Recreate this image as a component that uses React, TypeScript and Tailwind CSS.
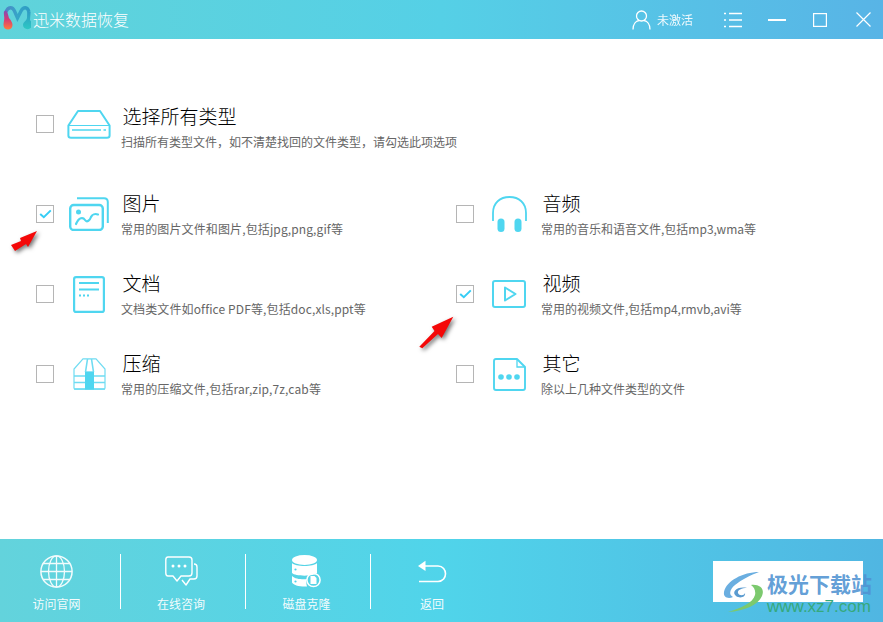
import type { ReactNode } from "react";

const font = { fontFamily: '"Noto Sans CJK SC", "Noto Sans", sans-serif' };

function Logo() {
  return (
    <svg width="28" height="25" viewBox="0 0 28 25" fill="none">
      <defs>
        <linearGradient id="lg" x1="0" y1="0" x2="0" y2="1">
          <stop offset="0" stopColor="#7d52b8" />
          <stop offset="0.45" stopColor="#d23a78" />
          <stop offset="1" stopColor="#ff7a3c" />
        </linearGradient>
        <linearGradient id="lt" x1="0" y1="0" x2="1" y2="0">
          <stop offset="0" stopColor="#4f86c6" />
          <stop offset="0.5" stopColor="#35a6c8" />
          <stop offset="1" stopColor="#2f9cc4" />
        </linearGradient>
        <linearGradient id="lr" x1="0" y1="0" x2="0" y2="1">
          <stop offset="0" stopColor="#2f9cc4" />
          <stop offset="1" stopColor="#2cc8c4" />
        </linearGradient>
      </defs>
      <path d="M3 7 C5 1.5 9.5 1.5 11.5 6 L14.5 13 L18 6 C20.5 1.5 24.5 1.5 26 7" stroke="url(#lt)" strokeWidth="3.4" />
      <path d="M.8 8 C.8 4.5 4 4.5 4.6 8 L6 13 C8.5 16 9.5 18 9.5 20 C9.5 26 .5 26 .5 20 C.5 17 1.5 15 1.2 12 Z" fill="url(#lg)" />
      <path d="M24.2 7 H27.6 L27 15 C28.5 17 29 18.5 29 20 C29 25.5 20 25.5 20 20 C20 17 23.5 16 24 13 Z" fill="url(#lr)" />
    </svg>
  );
}

function Check() {
  return (
    <svg width="13" height="10" viewBox="0 0 13 10" fill="none">
      <path d="M1.2 5 L4.8 8.2 L11.8 1.4" stroke="#36cdf5" strokeWidth="2" />
    </svg>
  );
}

const stroke = "#4fd6f0";

function DiskIcon() {
  return (
    <svg width="44" height="29" viewBox="0 0 44 29" fill="none" stroke={stroke} strokeWidth="2">
      <path d="M11 1 H33 L42.6 15.5 V25.5 Q42.6 27.8 40 27.8 H4 Q1.4 27.8 1.4 25.5 V15.5 Z" strokeLinejoin="round" />
      <path d="M1.4 15.5 H42.6" strokeWidth="1.2" />
      <path d="M5 20 H34 M36.5 20 H39" strokeWidth="1.6" />
    </svg>
  );
}

function PictureIcon() {
  return (
    <svg width="40" height="34" viewBox="0 0 40 34" fill="none" stroke={stroke} strokeWidth="2">
      <rect x="1.2" y="8" width="32.6" height="25" rx="3.5" strokeWidth="2.4" />
      <path d="M8 1.2 H35 Q38.8 1.2 38.8 5 V26" />
      <circle cx="9.5" cy="15" r="2.5" fill={stroke} stroke="none" />
      <path d="M7 27 C10 20 14 20 16 23 C18 26 21 23 22 20 C23 17.5 26 16.5 29 17.5" strokeWidth="2.2" strokeLinecap="round" />
    </svg>
  );
}

function DocIcon() {
  return (
    <svg width="32" height="37" viewBox="0 0 32 37" fill="none" stroke={stroke}>
      <rect x="1.1" y="1.1" width="29.8" height="34.8" rx="2" strokeWidth="2.2" />
      <path d="M6 7 H26 M6 13.5 H26" strokeWidth="2.2" />
      <path d="M6 19.5 H8 M10 19.5 H12 M14 19.5 H16" strokeWidth="1.8" />
    </svg>
  );
}

function ZipIcon() {
  return (
    <svg width="33" height="32" viewBox="0 0 33 32" fill="none" stroke="#6fdcf2" strokeWidth="1.2">
      <path d="M10 .8 H23 L32 11 V30 Q32 31.2 30.8 31.2 H2.2 Q1 31.2 1 30 V11 Z" />
      <path d="M1 18 H32 M1 24.5 H32 M1 31 H32" strokeWidth="1.4" />
      <path d="M14.5 1 L12.5 14 M18.5 1 L20.5 14 M12.5 14 H20.5" strokeWidth="1.6" />
      <rect x="12" y="14" width="9" height="17.5" fill={stroke} stroke="none" />
    </svg>
  );
}

function AudioIcon() {
  return (
    <svg width="35" height="36" viewBox="0 0 35 36" fill="none" stroke={stroke}>
      <path d="M1 25 V17 C1 7 8 1 17.5 1 C27 1 34 7 34 17 V25" strokeWidth="1.8" />
      <rect x="5.5" y="22.5" width="7" height="13.5" rx="3.5" fill={stroke} stroke="none" />
      <rect x="22.5" y="22.5" width="7" height="13.5" rx="3.5" fill={stroke} stroke="none" />
    </svg>
  );
}

function VideoIcon() {
  return (
    <svg width="34" height="28" viewBox="0 0 34 28" fill="none" stroke={stroke} strokeWidth="2">
      <rect x="1" y="1" width="32" height="26" rx="2" />
      <path d="M13 7.5 L23.5 14 L13 20.5 Z" strokeLinejoin="round" />
    </svg>
  );
}

function OtherIcon() {
  return (
    <svg width="33" height="33" viewBox="0 0 33 33" fill="none" stroke={stroke} strokeWidth="1.9">
      <path d="M24 1 H3 Q1 1 1 3 V30 Q1 32 3 32 H30 Q32 32 32 30 V9 Z" strokeLinejoin="round" />
      <path d="M24 1 V9 H32" fill="none" strokeWidth="1.3" />
      <circle cx="8" cy="19" r="2.8" fill={stroke} stroke="none" />
      <circle cx="16" cy="19" r="2.8" fill={stroke} stroke="none" />
      <circle cx="24" cy="19" r="2.8" fill={stroke} stroke="none" />
    </svg>
  );
}

function GlobeIcon() {
  return (
    <svg width="33" height="33" viewBox="0 0 33 33" fill="none" stroke="#fff" strokeWidth="1.3" opacity="0.92">
      <circle cx="16.5" cy="16.5" r="15.6" strokeWidth="1.5" />
      <ellipse cx="16.5" cy="16.5" rx="8" ry="15.6" />
      <path d="M16.5 1 V32 M1 16.5 H32 M3.5 8.5 H29.5 M3.5 24.5 H29.5" />
    </svg>
  );
}

function ChatIcon() {
  return (
    <svg width="33" height="30" viewBox="0 0 33 30" fill="none" stroke="#fff" strokeWidth="1.4">
      <path d="M3 1 H24 Q27 1 27 4 V17 Q27 20 24 20 H16 L12 25 L8 20 H3 Q.8 20 .8 17 V4 Q.8 1 3 1 Z" strokeLinejoin="round" />
      <path d="M29 8 Q32 8 32 11 V20 Q32 23 29 23 H25 L21 29 L17 24" strokeLinejoin="round" />
      <circle cx="8" cy="10" r="1.5" fill="#fff" stroke="none" />
      <circle cx="14" cy="10" r="1.5" fill="#fff" stroke="none" />
      <circle cx="20" cy="10" r="1.5" fill="#fff" stroke="none" />
    </svg>
  );
}

function DbIcon() {
  return (
    <svg width="29" height="33" viewBox="0 0 29 33" fill="#fff">
      <ellipse cx="12.5" cy="5" rx="12.5" ry="5" />
      <path d="M0 8 C3 12 22 12 25 8 V18 C22 21.5 3 21.5 0 18 Z" />
      <path d="M0 21 C3 24.5 12 24.5 15 24 C14 26 14 28 15 31.5 C8 32 1 30 0 27.5 Z" />
      <circle cx="3.5" cy="14.5" r="1.1" fill="#4fd3ea" />
      <circle cx="3.5" cy="26.5" r="1.1" fill="#4fd3ea" />
      <circle cx="21.5" cy="25" r="6.6" fill="none" stroke="#fff" strokeWidth="1.5" />
      <path d="M18.5 21 H22.5 L24.5 23 V29 H18.5 Z" />
    </svg>
  );
}

function BackIcon() {
  return (
    <svg width="29" height="23" viewBox="0 0 29 23" fill="none" stroke="#fff" strokeWidth="1.6">
      <path d="M6 6 H20 C30 6 30 21.5 20 21.5 H1" />
      <path d="M0 6 L7.5 .8 V11 Z" fill="#fff" stroke="none" />
    </svg>
  );
}

function Option({ title, desc, icon, checked, lower, wide }: { title: string; desc: string; icon: ReactNode; checked?: boolean; lower?: boolean; wide?: boolean }) {
  return (
    <div className="flex items-center h-20">
      <div className="flex items-center justify-center w-[18px] h-[18px] border border-[#b5b5b5] bg-white shrink-0">
        {checked && <Check />}
      </div>
      <div className="flex items-center justify-center w-[64px] ml-[3px] shrink-0">{icon}</div>
      <div className={lower ? "pt-[6px]" : ""}>
        <div className="text-[19px] leading-[26px] font-light text-black pl-[1.5px] mt-[-1px] whitespace-nowrap">{title}</div>
        <div className={`text-[12px] leading-[16px] mt-[5px] text-[#666] whitespace-nowrap ${wide ? "tracking-[0.12px]" : ""}`}>{desc}</div>
      </div>
    </div>
  );
}

function FootItem({ icon, label, className }: { icon: ReactNode; label: string; className: string }) {
  return (
    <div className={`flex flex-col items-center justify-between h-[55px] ${className}`}>
      <div className="flex items-center justify-center h-[34px]">{icon}</div>
      <div className="text-[12px] leading-[14px] text-white/95 mb-[-2px]">{label}</div>
    </div>
  );
}

function Arrow({ className, points }: { className: string; points: string }) {
  return (
    <svg className={`absolute ${className}`} width="44" height="40" viewBox="0 0 44 40" style={{ filter: "drop-shadow(2px 2px 2px rgba(0,0,0,0.55))" }}>
      <polygon points={points} fill="#f40808" />
    </svg>
  );
}

export default function App() {
  return (
    <div className="relative w-[883px] h-[622px] flex flex-col bg-white overflow-hidden" style={font}>
      <header className="h-[39px] flex items-center shrink-0 bg-gradient-to-r from-[#60d3da] via-[#55d0e6] to-[#58b4e6] text-white">
        <div className="ml-[3px] w-[28px] mt-[-4px]">
          <Logo />
        </div>
        <span className="ml-[2px] text-[16px] leading-none mt-[-1px] font-light">迅米数据恢复</span>
        <div className="ml-auto flex items-center">
          <svg width="19" height="20" viewBox="0 0 19 20" fill="none" stroke="#fff" strokeWidth="1.3">
            <circle cx="9.5" cy="6" r="5" />
            <path d="M1 19.5 C1 14 4 11 7 10.5 M18 19.5 C18 14 15 11 12 10.5" />
          </svg>
          <span className="ml-[6px] text-[12px] opacity-90">未激活</span>
          <svg className="ml-[31px]" width="18" height="16" viewBox="0 0 18 16" stroke="#fff" strokeWidth="1.5">
            <path d="M0 1.5 H2 M5 1.5 H18 M0 8 H2 M5 8 H18 M0 14.5 H2 M5 14.5 H18" />
          </svg>
          <svg className="ml-[26px]" width="18" height="2" viewBox="0 0 18 2" stroke="#fff" strokeWidth="2">
            <path d="M0 1 H18" />
          </svg>
          <svg className="ml-[27px]" width="14" height="14" viewBox="0 0 14 14" fill="none" stroke="#fff" strokeWidth="1.2">
            <rect x=".6" y=".6" width="12.8" height="12.8" />
          </svg>
          <svg className="ml-[29px] mr-[12px]" width="15" height="15" viewBox="0 0 15 15" stroke="#fff" strokeWidth="1.2">
            <path d="M.5 .5 L14.5 14.5 M14.5 .5 L.5 14.5" />
          </svg>
        </div>
      </header>

      <main className="flex-1 pt-[45px] pl-[36px]">
        <div className="mb-[10px]">
          <Option lower icon={<DiskIcon />} title="选择所有类型" desc="扫描所有类型文件，如不清楚找回的文件类型，请勾选此项选项" />
        </div>
        <div className="grid grid-cols-[420px_1fr]">
          <Option checked wide icon={<PictureIcon />} title="图片" desc="常用的图片文件和图片,包括jpg,png,gif等" />
          <Option icon={<AudioIcon />} title="音频" desc="常用的音乐和语音文件,包括mp3,wma等" />
          <Option wide icon={<DocIcon />} title="文档" desc="文档类文件如office PDF等,包括doc,xls,ppt等" />
          <Option checked icon={<VideoIcon />} title="视频" desc="常用的视频文件,包括mp4,rmvb,avi等" />
          <Option wide icon={<ZipIcon />} title="压缩" desc="常用的压缩文件,包括rar,zip,7z,cab等" />
          <Option icon={<OtherIcon />} title="其它" desc="除以上几种文件类型的文件" />
        </div>
      </main>

      <footer className="h-[83px] shrink-0 flex items-start pt-[15px] bg-gradient-to-r from-[#63d3dc] via-[#50d4ea] to-[#50b6e2]">
        <FootItem icon={<GlobeIcon />} label="访问官网" className="w-[121px] pr-[7px] border-r border-white" />
        <FootItem icon={<ChatIcon />} label="在线咨询" className="w-[125px] pr-[4px] border-r border-white" />
        <FootItem icon={<DbIcon />} label="磁盘克隆" className="w-[125px] pr-[3px] border-r border-white" />
        <FootItem icon={<BackIcon />} label="返回" className="w-[122px]" />
      </footer>

      {/* annotation arrows */}
      <Arrow className="left-[8px] top-[228px]" points="29,3 20,19 18,16 7,23 3,17 13,13 12,10" />
      <Arrow className="left-[416px] top-[314px]" points="37.3,2.7 25.7,24 22,20 6.3,34.3 3.3,32.7 18.5,17 15.7,12.7" />

      {/* watermark */}
      <div className="absolute left-[713px] top-[561px] w-[150px] h-[41px] bg-white" />
      <svg className="absolute left-[723px] top-[571px]" width="44" height="42" viewBox="0 0 44 42" fill="none">
        <path d="M36 1 C20 1 3 10 1 21 C0 27 6 28 10 26 C6 24 6 19 12 14 C18 9 28 4 36 1 Z" fill="#6aaee0" />
        <path d="M24 17 C14 15 8 21 13 25 C17 28 23 26 22 22 C21 25 16 25 15 22 C14 19 19 17 24 17 Z" fill="#5a9bd0" />
        <path d="M28 14 C37 13 42 18 39 25 C35 34 22 40 5 41 C18 37 30 32 32 24 C33 20 31 16 28 14 Z" fill="#7cc96e" />
      </svg>
      <div className="absolute left-[767px] top-[569px] text-[21px] leading-[28px] font-bold text-[#4f93d2]/90 whitespace-nowrap">极光下载站</div>
      <div className="absolute left-[767px] top-[597px] text-[17px] leading-[20px] text-[#35a97c] whitespace-nowrap" style={{ fontFamily: '"Liberation Sans", sans-serif' }}>www.xz7.com</div>
    </div>
  );
}
